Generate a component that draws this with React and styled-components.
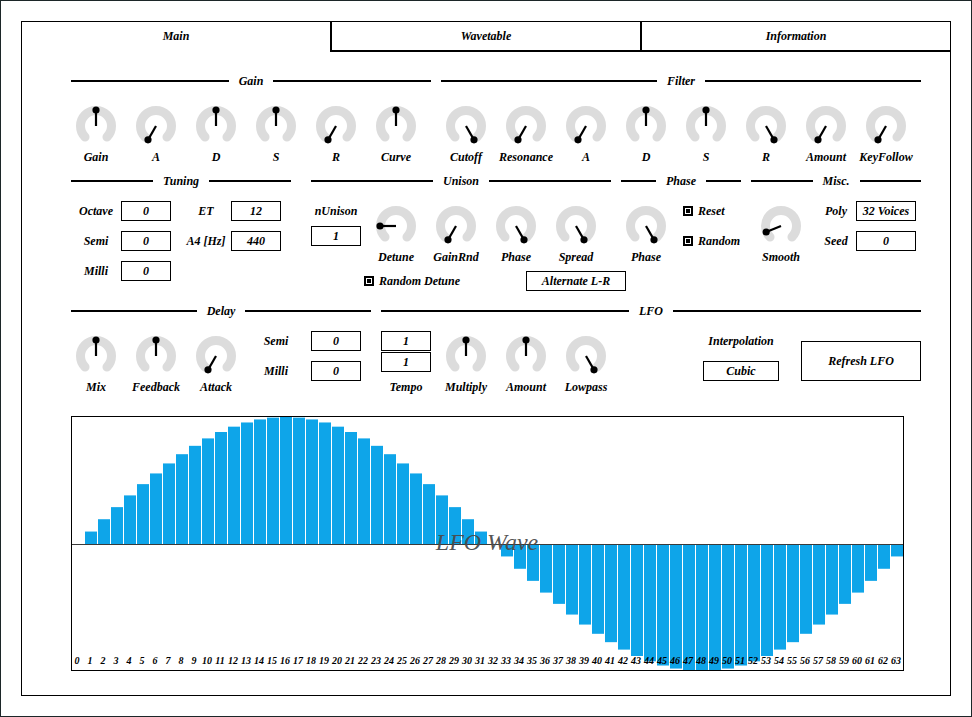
import React from 'react';
import styled, { createGlobalStyle } from 'styled-components';

const Global = createGlobalStyle`
  html, body { margin: 0; padding: 0; background: #fff; }
  body {
    font-family: "Liberation Serif", "Times New Roman", serif;
    font-style: italic;
    font-weight: bold;
    font-size: 12px;
    color: #000;
  }
  * { box-sizing: border-box; }
`;

const Frame = styled.div`
  width: 972px;
  height: 717px;
  border: 1px solid #1c2628;
  padding: 20px 0 0 20px;
`;

const Panel = styled.div`
  width: 930px;
  height: 675px;
  border: 1px solid #000;
  display: flex;
  flex-direction: column;
`;

const TabBar = styled.div`
  display: flex;
  height: 30px;
  flex: none;
`;

const Tab = styled.div`
  flex: 1;
  display: flex;
  align-items: center;
  justify-content: center;
  line-height: 14px;
  border-left: ${(p) => (p.$first ? 'none' : '2px solid #000')};
  border-bottom: ${(p) => (p.$active ? 'none' : '2px solid #000')};
  padding-bottom: ${(p) => (p.$active ? '2px' : '0')};
`;

const Content = styled.div`
  padding: 21px 0 0 49px;
  display: flex;
  flex-direction: column;
`;

const Row = styled.div`
  display: flex;
  align-items: flex-start;
  margin-top: ${(p) => p.$mt || 0}px;
`;

const Section = styled.div`
  width: ${(p) => p.$w}px;
  margin-left: ${(p) => p.$ml || 0}px;
  display: flex;
  flex-direction: column;
  flex: none;
`;

const Header = styled.div`
  display: flex;
  align-items: center;
  gap: 10px;
  height: 16px;
  line-height: 16px;
  &::before,
  &::after {
    content: '';
    flex: 1;
    height: 2px;
    background: #000;
  }
`;

const Body = styled.div`
  display: flex;
  align-items: flex-start;
  gap: ${(p) => (p.$gap === undefined ? 10 : p.$gap)}px;
  margin-left: ${(p) => p.$ml || 0}px;
`;

const KnobCellWrap = styled.div`
  width: 50px;
  flex: none;
  display: flex;
  flex-direction: column;
  align-items: center;
  margin-top: 17px;
`;

const KnobLabel = styled.div`
  margin-top: 4px;
  line-height: 14px;
  white-space: nowrap;
`;

const ValueBox = styled.div`
  width: ${(p) => p.$w || 50}px;
  height: ${(p) => p.$h || 20}px;
  border: 1px solid #000;
  display: flex;
  align-items: center;
  justify-content: center;
  line-height: 14px;
  white-space: nowrap;
  flex: none;
  margin-top: ${(p) => p.$mt || 0}px;
  margin-left: ${(p) => p.$ml || 0}px;
`;

const FieldGrid = styled.div`
  display: grid;
  grid-template-columns: ${(p) => p.$cols};
  grid-auto-rows: 20px;
  column-gap: ${(p) => p.$cg || 0}px;
  row-gap: 10px;
  margin-top: 12px;
  margin-left: ${(p) => p.$ml || 0}px;
`;

const Field = styled.div`
  display: grid;
  grid-template-columns: ${(p) => p.$cols || '50px 50px'};
  align-items: center;
`;

const FieldLabel = styled.div`
  text-align: center;
  line-height: 14px;
  white-space: nowrap;
  width: ${(p) => (p.$w ? `${p.$w}px` : 'auto')};
`;

const Column = styled.div`
  display: flex;
  flex-direction: column;
  align-items: ${(p) => p.$align || 'center'};
  width: ${(p) => (p.$w ? `${p.$w}px` : 'auto')};
  margin-top: ${(p) => p.$mt || 0}px;
  margin-left: ${(p) => p.$ml || 0}px;
  gap: ${(p) => p.$gap || 0}px;
  flex: none;
`;

const TextLine = styled.div`
  line-height: 14px;
  white-space: nowrap;
  margin-top: ${(p) => p.$mt || 0}px;
`;

const CheckItem = styled.div`
  display: flex;
  align-items: center;
  gap: 5px;
  height: 14px;
  width: ${(p) => (p.$w ? `${p.$w}px` : 'auto')};
  margin-left: ${(p) => p.$ml || 0}px;
  line-height: 14px;
  white-space: nowrap;
  flex: none;
`;

const CheckBox = styled.span`
  width: 10px;
  height: 10px;
  border: 2px solid #000;
  background: #000;
  box-shadow: inset 0 0 0 1px #fff;
  flex: none;
`;

const BottomRow = styled.div`
  display: flex;
  align-items: center;
  height: 20px;
  margin-top: 7px;
`;

const Button = styled.div`
  width: 120px;
  height: 40px;
  border: 1px solid #000;
  display: flex;
  align-items: center;
  justify-content: center;
  margin-left: 12px;
  margin-top: 22px;
  flex: none;
`;

const ChartBox = styled.div`
  width: 833px;
  height: 255px;
  border: 1px solid #000;
  margin-top: 22px;
  overflow: hidden;
`;

function Knob({ angle }) {
  const cx = 20;
  const cy = 20;
  const r = 15.5;
  const rad = (d) => (d * Math.PI) / 180;
  const pt = (a, rr) => [cx + rr * Math.sin(rad(a)), cy - rr * Math.cos(rad(a))];
  const [x0, y0] = pt(-135, r);
  const [x1, y1] = pt(135, r);
  const [px, py] = pt(angle, 16);
  return (
    <svg width="40" height="40" viewBox="0 0 40 40" style={{ overflow: 'visible', display: 'block' }}>
      <path
        d={`M ${x0} ${y0} A ${r} ${r} 0 1 1 ${x1} ${y1}`}
        fill="none"
        stroke="#dcdcdc"
        strokeWidth="9"
        strokeLinecap="round"
      />
      <line x1={cx} y1={cy} x2={px} y2={py} stroke="#000" strokeWidth="2.2" />
      <circle cx={px} cy={py} r="3.6" fill="#000" />
    </svg>
  );
}

function KnobCell({ label, angle }) {
  return (
    <KnobCellWrap>
      <Knob angle={angle} />
      <KnobLabel>{label}</KnobLabel>
    </KnobCellWrap>
  );
}

function Chart() {
  const W = 831;
  const H = 253;
  const mid = 127;
  const amp = 127;
  const bars = [];
  const labels = [];
  for (let i = 0; i < 64; i++) {
    const v = Math.sin((2 * Math.PI * i) / 64) * amp;
    const x = 13 * i;
    if (v >= 0) {
      bars.push(<rect key={i} x={x} y={mid - v} width="12" height={v} fill="#0ea5e9" />);
    } else {
      bars.push(<rect key={i} x={x} y={mid} width="12" height={-v} fill="#0ea5e9" />);
    }
    labels.push(
      <text key={i} x={x + 5} y="247" textAnchor="middle" fontSize="10" fontWeight="bold" fontStyle="italic" fill="#000">
        {i}
      </text>
    );
  }
  return (
    <svg width={W} height={H} viewBox={`0 0 ${W} ${H}`} style={{ display: 'block' }} fontFamily='"Liberation Serif", serif'>
      {bars}
      <line x1="0" y1={mid + 0.5} x2={W} y2={mid + 0.5} stroke="#3a3a3a" strokeWidth="1" />
      <text x="415" y="133" textAnchor="middle" fontSize="24" fontStyle="italic" fontWeight="normal" fill="#4a4a4a" fillOpacity="0.95">
        LFO Wave
      </text>
      {labels}
    </svg>
  );
}

const gainKnobs = [
  ['Gain', 0], ['A', -150], ['D', 0], ['S', 0], ['R', -150], ['Curve', 0],
];
const filterKnobs = [
  ['Cutoff', 150], ['Resonance', -150], ['A', -150], ['D', 0], ['S', 0], ['R', 150], ['Amount', -150], ['KeyFollow', -150],
];

export default function App() {
  return (
    <>
      <Global />
      <Frame>
        <Panel>
          <TabBar>
            <Tab $first $active>Main</Tab>
            <Tab>Wavetable</Tab>
            <Tab>Information</Tab>
          </TabBar>
          <Content>
            <Row>
              <Section $w={360}>
                <Header>Gain</Header>
                <Body>
                  {gainKnobs.map(([l, a]) => (
                    <KnobCell key={l} label={l} angle={a} />
                  ))}
                </Body>
              </Section>
              <Section $w={480} $ml={10}>
                <Header>Filter</Header>
                <Body>
                  {filterKnobs.map(([l, a], i) => (
                    <KnobCell key={i} label={l} angle={a} />
                  ))}
                </Body>
              </Section>
            </Row>

            <Row $mt={9}>
              <Section $w={220}>
                <Header>Tuning</Header>
                <FieldGrid $cols="100px 100px" $cg={10}>
                  <Field><FieldLabel>Octave</FieldLabel><ValueBox>0</ValueBox></Field>
                  <Field><FieldLabel>ET</FieldLabel><ValueBox>12</ValueBox></Field>
                  <Field><FieldLabel>Semi</FieldLabel><ValueBox>0</ValueBox></Field>
                  <Field><FieldLabel>A4 [Hz]</FieldLabel><ValueBox>440</ValueBox></Field>
                  <Field><FieldLabel>Milli</FieldLabel><ValueBox>0</ValueBox></Field>
                </FieldGrid>
              </Section>
              <Section $w={300} $ml={20}>
                <Header>Unison</Header>
                <Body>
                  <Column $w={50} $mt={15}>
                    <TextLine>nUnison</TextLine>
                    <ValueBox $mt={8}>1</ValueBox>
                  </Column>
                  <KnobCell label="Detune" angle={-90} />
                  <KnobCell label="GainRnd" angle={-150} />
                  <KnobCell label="Phase" angle={150} />
                  <KnobCell label="Spread" angle={150} />
                </Body>
                <BottomRow>
                  <CheckItem $ml={53} $w={162}>
                    <CheckBox />
                    Random Detune
                  </CheckItem>
                  <ValueBox $w={100}>Alternate L-R</ValueBox>
                </BottomRow>
              </Section>
              <Section $w={120} $ml={10}>
                <Header>Phase</Header>
                <Body $gap={0}>
                  <KnobCell label="Phase" angle={150} />
                  <Column $align="flex-start" $ml={12} $mt={15} $gap={16}>
                    <CheckItem>
                      <CheckBox />
                      Reset
                    </CheckItem>
                    <CheckItem>
                      <CheckBox />
                      Random
                    </CheckItem>
                  </Column>
                </Body>
              </Section>
              <Section $w={170} $ml={10}>
                <Header>Misc.</Header>
                <Body $gap={0} $ml={5}>
                  <KnobCell label="Smooth" angle={-112} />
                  <FieldGrid $cols="100px" $ml={10}>
                    <Field $cols="40px 60px"><FieldLabel>Poly</FieldLabel><ValueBox $w={60}>32 Voices</ValueBox></Field>
                    <Field $cols="40px 60px"><FieldLabel>Seed</FieldLabel><ValueBox $w={60}>0</ValueBox></Field>
                  </FieldGrid>
                </Body>
              </Section>
            </Row>

            <Row $mt={12}>
              <Section $w={300}>
                <Header>Delay</Header>
                <Body>
                  <KnobCell label="Mix" angle={0} />
                  <KnobCell label="Feedback" angle={0} />
                  <KnobCell label="Attack" angle={-150} />
                  <FieldGrid $cols="110px">
                    <Field $cols="60px 50px"><FieldLabel $w={50}>Semi</FieldLabel><ValueBox>0</ValueBox></Field>
                    <Field $cols="60px 50px"><FieldLabel $w={50}>Milli</FieldLabel><ValueBox>0</ValueBox></Field>
                  </FieldGrid>
                </Body>
              </Section>
              <Section $w={540} $ml={10}>
                <Header>LFO</Header>
                <Body>
                  <Column $w={50} $mt={12}>
                    <ValueBox>1</ValueBox>
                    <ValueBox $mt={1}>1</ValueBox>
                    <TextLine $mt={8}>Tempo</TextLine>
                  </Column>
                  <KnobCell label="Multiply" angle={0} />
                  <KnobCell label="Amount" angle={0} />
                  <KnobCell label="Lowpass" angle={150} />
                  <Column $w={76} $ml={82} $mt={15}>
                    <TextLine>Interpolation</TextLine>
                    <ValueBox $w={76} $mt={13}>Cubic</ValueBox>
                  </Column>
                  <Button>Refresh LFO</Button>
                </Body>
              </Section>
            </Row>

            <ChartBox>
              <Chart />
            </ChartBox>
          </Content>
        </Panel>
      </Frame>
    </>
  );
}
